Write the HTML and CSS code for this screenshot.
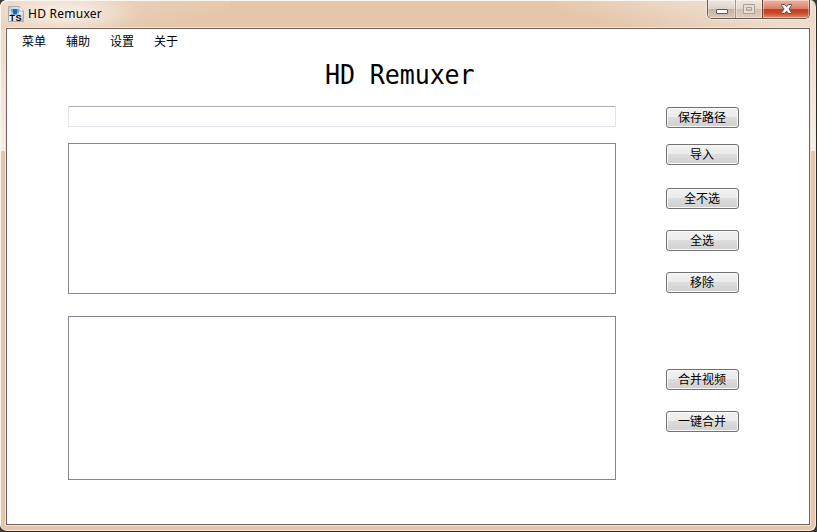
FILE: index.html
```html
<!DOCTYPE html>
<html lang="zh-CN">
<head>
<meta charset="utf-8">
<title>HD Remuxer</title>
<link rel="stylesheet" href="styles.css">
</head>
<body>
<div class="window">
  <header class="titlebar">
    <svg class="app-icon" width="16" height="16" viewBox="0 0 16 16">
      <defs><linearGradient id="page" x2="1" y2="1"><stop stop-color="#b9c3cb"/><stop offset=".5" stop-color="#f5f6f6"/><stop offset="1" stop-color="#b8bcbd"/></linearGradient></defs>
      <path d="M.5.5H11L15.500 5v10.500H.5z" fill="url(#page)" stroke="#a5adb0"/>
      <path d="M11 .5V5h4.500" fill="#f6f6f6" stroke="#a8adb0"/>
      <path d="M3 3h8v6H3z" fill="#6ba5d2"/><path d="M5 3h4v5H5z" fill="#1766b0"/><path d="M3 6h2v2H3zM9 7h2v2H9z" fill="#a9d7ee"/>
      <text x="1.500" y="15" class="icon-text">TS</text>
    </svg>
    <span class="caption">HD Remuxer</span>
    <div class="controls">
      <span class="control minimize"><svg width="27" height="18" viewBox="0 0 27 18"><rect x="8.500" y="9.500" width="11" height="4" rx=".5" fill="#fff" stroke="#555765"/></svg></span>
      <span class="control maximize"><svg width="26" height="18" viewBox="0 0 26 18"><path d="M7.500 4.500h11v9h-11zM10.500 7.500h5v3h-5z" fill="#e5dcd4" fill-rule="evenodd" stroke="#a79e97"/></svg></span>
      <span class="control close"><svg width="46" height="18" viewBox="0 0 46 18"><path d="M18.500 4.500h3l2 2.200 2-2.200h3v1L26 9l2.500 3.500v1h-3l-2-2.300-2 2.300h-3v-1L21 9l-2.500-3.500z" fill="#f5f5f5" stroke="#54505c"/></svg></span>
    </div>
  </header>
  <div class="client">
    <nav class="menu"><span>菜单</span><span>辅助</span><span>设置</span><span>关于</span></nav>
    <h1><span>HD Remuxer</span></h1>
    <main>
      <section class="fields">
        <input type="text" class="path">
        <div class="list sources"></div>
        <div class="list outputs"></div>
      </section>
      <aside class="actions">
        <button class="save">保存路径</button>
        <button class="import">导入</button>
        <button>全不选</button>
        <button>全选</button>
        <button>移除</button>
        <button class="merge">合并视频</button>
        <button>一键合并</button>
      </aside>
    </main>
  </div>
</div>
</body>
</html>
```
FILE: styles.css
```css
* { box-sizing: border-box; }
body {
  margin: 0;
  background: #3a3a3a;
  font: 12px/16px "Noto Sans CJK SC", sans-serif;
  color: #000;
}
.window {
  width: 817px;
  height: 532px;
  display: flex;
  flex-direction: column;
  padding: 0 6px 6px;
  border: 1px solid #2e2824;
  border-width: 0 1px 1px 0;
  border-radius: 7px;
  box-shadow: inset 1px 1px #faf6f0, inset -1px -1px #f4ebe3;
  background:
    radial-gradient(ellipse 75px 22px at 65px 13px, #f6ebe1 20%, #f6ebe100 100%) no-repeat,
    linear-gradient(165deg, #eddaca 0, #e5c6aa00 80%) 0 0 / 230px 29px no-repeat,
    linear-gradient(195deg, #eddbcc 0, #eddbcc 35%, #e5c6aa00 80%) 100% 0 / 260px 29px no-repeat,
    linear-gradient(#eddaca, #f6eee7) 0 29px / 6px 122px no-repeat,
    linear-gradient(#eedbcb, #f6eee7) 100% 29px / 7px 122px no-repeat,
    #e5c6aa;
}
.titlebar {
  height: 28px;
  flex: none;
  display: flex;
  align-items: flex-start;
}
.app-icon { margin: 6px 0 0 2px; }
.icon-text { font: bold 9px "Liberation Sans", sans-serif; letter-spacing: .5px; }
.caption {
  margin: 6px 0 0 4px;
  font: 12px/16px "Noto Sans", sans-serif;
  letter-spacing: .25px;
}
.controls {
  display: flex;
  height: 19px;
  margin: 0 0 0 auto;
  border: 1px solid #665951;
  border-top: 0;
  border-radius: 0 0 5px 5px;
  overflow: hidden;
  box-shadow: 0 0 0 1px #f6e9de;
}
.control {
  height: 18px;
  box-shadow: inset 0 0 0 1px #ffffff66;
  background: linear-gradient(#eee7e1 0, #dfd2c7 48%, #c3b1a2 50%, #d7c8ba 100%);
}
.control svg { display: block; }
.maximize {
  border-left: 1px solid #a29387;
  background: linear-gradient(#efe5dc 0, #e5d7ca 48%, #d3c0b0 50%, #decdbd 100%);
}
.close {
  border-left: 1px solid #6c4034;
  background: linear-gradient(#efb6a3 0, #d9806b 48%, #c53c22 50%, #cb4b2c 75%, #e29377 100%);
}
.client {
  flex: 1;
  border: 1px solid #70625a;
  background: #fff;
  box-shadow: 0 0 0 1px #f5e4d6;
}
.menu {
  display: flex;
  gap: 20px;
  height: 26px;
  padding: 4px 15px;
}
h1 {
  height: 52px;
  margin: 0;
  padding: 5px 0 0 318px;
  font: 25px/30px "DejaVu Sans Mono", monospace;
}
h1 span {
  display: inline-block;
  letter-spacing: -.1px;
  transform: scaleY(1.08);
}
main {
  display: grid;
  grid-template-columns: 548px 73px;
  column-gap: 50px;
  padding-left: 61px;
  margin-top: -1px;
}
.path {
  display: block;
  width: 548px;
  height: 21px;
  border: 1px solid #e2e3ea;
  border-top-color: #abadb3;
  border-radius: 1px;
  background: #fff;
  outline: 0;
}
.list { border: 1px solid #828790; }
.sources { height: 151px; margin-top: 16px; }
.outputs { height: 164px; margin-top: 22px; }
.actions {
  display: flex;
  flex-direction: column;
  gap: 21px;
  padding-top: 1px;
}
button {
  width: 73px;
  height: 21px;
  padding: 0 1px 2px 0;
  border: 1px solid #707070;
  border-radius: 3px;
  box-shadow: inset 0 0 0 1px #fafafa;
  background: linear-gradient(#f2f2f2 0, #ebebeb 49%, #dddddd 50%, #cfcfcf 100%);
  color: #000;
  font: 12px/16px "Noto Sans CJK SC", sans-serif;
}
.save { margin-bottom: -5px; }
.import { margin-bottom: 2px; }
.merge { margin-top: 55px; }
```
